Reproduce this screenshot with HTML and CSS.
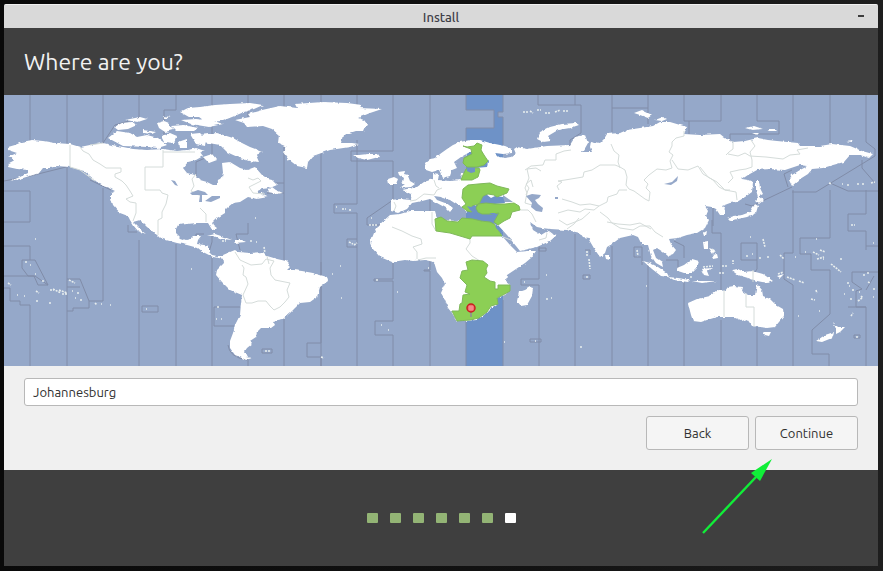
FILE: index.html
```html
<!DOCTYPE html>
<html lang="en">
<head>
    <meta charset="UTF-8">
    <meta name="viewport" content="width=device-width, initial-scale=1.0">
    <title>Install</title>
    <link rel="stylesheet" href="styles.css">
</head>
<body>
    <div class="window">
        <div class="titlebar">
            <span class="titlebar-text">Install</span>
            <button class="minimize" aria-label="Minimize"></button>
        </div>

        <header class="page-header">
            <h1>Where are you?</h1>
        </header>

        <svg class="map" viewBox="4 95 874 271" role="img" aria-label="Timezone map">
            <defs>
                <filter id="coast" x="0" y="0" width="100%" height="100%" color-interpolation-filters="sRGB">
                    <feTurbulence type="fractalNoise" baseFrequency="0.22" numOctaves="2" seed="4" result="noise"/>
                    <feDisplacementMap in="SourceGraphic" in2="noise" scale="3" xChannelSelector="R" yChannelSelector="G"/>
                </filter>
            </defs>

            <rect class="sea" x="4" y="95" width="874" height="271"/>

            <!-- selected timezone -->
            <path class="zone-sea" d="M466 95H503V112H498V117H503V366H466V128H494V110H466Z"/>

            <!-- timezone borders -->
            <g class="zones">
                <path d="M30 95V142M67 95V144M103 95V143M139 95V118L115 125L103 143M176 95V110H164V135M212 95V155L196 162V180M248 95V117M284 95V366M321 95V366M357 95V120M393 95V151H351V161H393V200L367 218V225H380V234"/>
                <path d="M430 95V160M430 198V212M466 95V110H494V128H466V142M503 95V112H498V117H503V145M538 95V105H575M539 234V279H521V285H539V366M575 95V105H581V133L570 140V147M612 95V132M612 108H648V95M648 108V124M684 95V121H721V95M689 121V134M757 95V121H779V134H730V142M793 95V141M830 95V143M866 95V142L875 149V156L816 192H792M862 160V168L875 183M830 183L848 191H878"/>
                <path d="M4 181L30 176L66 167M4 191H30V222H4M30 246H4M30 246V260H22V268L28 276H35L48 285H38L34 276H4M4 288H10V301H20V305H30V366M30 260H35L48 285M67 167V366M103 188V301H89L80 279H67M67 287H80M67 311H73V308H89V301M139 240V366M128 225V232H137M176 244V366M212 256V366M212 236V242L209 252M196 240V234H204"/>
                <path d="M248 223V234H236L240 250M248 359V366M276 183H284M267 193H284M321 262V343H307V357H321V366M357 140V204H334V213H357V366M357 239H347V247H357M393 261V279H374V281H393V321H375V335H393V366M430 261V270H424V271H430V366M466 320V366M503 300V366"/>
                <path d="M575 234V366M612 246V366M648 265V366M684 282V366M684 258V246L674 241M642 265V247H634V257H641M721 320V366M721 290V233H712V220M757 327V366M757 260V243H741V260H757V269L753 275M793 366V285L784 279V253H793V190M829 366V354H812V330L830 314V270H811V254H800V238H830V190M866 366V307H856V291L862 289L852 282V272H878M866 250V231H848V214H866V190M866 307H848M866 246H878M866 290L874 276M713 203V226M666 260H678V270M585 250H590V255M583 275H590V279H583Z"/>
                <path d="M214 307H240M214 307V326H234M142 306H158V312H142ZM262 349H272V353H262ZM530 339H541V342H530ZM854 335H860V338H854ZM539 248H546V251H539ZM792 187L752 206L745 204M792 170L784 174L788 187"/>
                <path d="M228 345Q229 357 247 360M90 180L111 190"/>
            </g>

            <g class="land" filter="url(#coast)">
                <!-- North America -->
                <path d="M8 147L15 145L22 142L32 140L43 141L55 143L70 144L80 147L90 145L103 143L112 145L123 147L133 149L147 150L163 149L177 151L187 150L200 152L203 156L196 160L188 162L183 168L187 173L195 175L200 180L207 182L213 185L217 185L218 181L222 178L223 173L222 163L230 162L240 168L247 170L255 167L262 175L268 179L272 180L277 185L270 188L262 189L255 192L262 192L264 196L268 197L257 199L248 197L240 202L233 203L228 207L225 210V213L217 218L212 223L213 225L217 228L215 230L211 228L208 223L197 223L187 224L178 225L176 229V234L180 238L186 240L190 239L193 236L201 236L198 240L197 244L204 245L209 246V252L212 255L217 256L224 256V259L213 257L203 252L198 248L187 245L177 243L166 240L160 238L157 235L147 227L140 220L133 222L137 226L142 231L146 234L138 231L133 225L130 220L128 216L120 213L113 205L111 198V193L115 191L109 188L103 186L97 182L90 176L84 171L80 170L70 167L57 166L50 168L43 168L39 173L33 175L20 179L10 181L20 177L28 173V170L17 169L8 167L9 163L15 160L8 157L17 153L8 150Z"/>
                <!-- Canadian arctic -->
                <path d="M108 138L117 131L130 133L137 137L147 135L158 138L167 145L158 148L147 147L123 146Z"/>
                <path d="M114 127L122 123L132 122L137 125L128 129L118 130ZM125 120L140 117L147 119L138 122ZM143 130L156 132L152 134L143 133ZM157 123L164 121L169 123L173 130L165 132L159 128ZM161 136L170 133L177 136L174 143L164 142ZM171 126L184 125L198 128L194 131L176 131ZM178 142L187 139L187 148L179 148ZM190 134L200 133L206 139L205 146L196 144ZM181 120L196 119L214 121L223 124L209 127L191 124ZM163 116L171 117L165 119ZM188 150L196 148L205 151L196 154Z"/>
                <path d="M180 112L188 108L200 107L215 105L230 104L250 103L263 105L254 109L244 112L232 117L222 121L206 122L199 117L189 117Z"/>
                <path d="M200 135L217 133L233 138L240 142L250 147L263 152L256 155L259 162L249 161L240 158L231 154L227 152L220 145L203 142ZM203 157L212 154L217 160L209 163Z"/>
                <!-- Greenland, Iceland -->
                <path d="M235 120L250 117L248 114L262 110L280 106L297 108L295 104L323 102L347 103L362 105L359 108L382 109L370 113L358 118L364 120L367 124L364 131L356 131L343 135L341 143L352 143L359 144L350 147L330 150L313 156L308 162L307 168L297 166L288 159L283 152L287 147L278 143L279 135L272 129L263 126L247 127L244 123Z"/>
                <path d="M353 155L359 155L368 154L377 154L379 157L367 160L358 158ZM267 192L272 187L276 190L283 193L277 194Z"/>
                <!-- South America -->
                <path d="M223 255L230 252L235 250L238 252L250 253L263 252L267 256L277 259L286 261L291 266L287 270L294 270L302 271L313 273L327 277L328 281L320 287L317 297L310 302L300 303L295 308L290 313L283 319L273 321L275 325L271 328L261 328L257 332L256 337L250 341L252 344L247 348L245 351L248 357L243 358L235 355L230 348V341L233 333L235 325L240 315L241 303L242 295L230 290L222 282L216 275L217 270L224 263Z"/>
                <path d="M238 356L252 358L246 360ZM207 236L215 234L224 237L232 240L223 239L213 236ZM234 240L242 240L246 242L235 243Z"/>
                <!-- Europe and Asia -->
                <path d="M425 163L430 159L436 158L440 154L447 149L453 145L460 142L470 140L480 140L490 143L505 146L512 149L512 153L503 154L495 153L499 157L505 158L512 157L516 154L514 149L517 147L527 149L547 146L570 145L575 137L585 135L588 143L584 150L580 152L592 152L590 147L591 141L600 143L604 139L607 134L620 133L627 130L640 128L653 126L660 122L670 122L687 127L684 134L700 135L720 134L725 138L733 142L745 141L758 138L768 140L777 141L798 143L800 146L820 146L832 144L850 146L862 151L873 154L869 158L860 155L850 155L844 162L833 165L823 168L812 169L808 174L800 179L792 186L789 180L792 175L800 170L808 166L800 165L785 170L770 169L757 170L748 175L742 179L748 180L753 182L752 192L745 197L737 202L730 203L722 206L725 210V215L720 215L716 209L712 207L705 206L708 211L706 216L709 220L705 228L697 233L687 235L678 238L669 239L671 244L676 250L673 254L668 256L663 252L657 248L653 250L656 258L662 262L663 267L656 263L651 256L648 245L642 245L638 237L633 235L620 238L612 244L607 247L605 253L600 257L595 250L588 238L583 237L580 233L567 230L550 229L542 228L537 227L530 222L533 230L541 235L546 232L549 231L553 234L557 235L550 241L537 247L520 251L516 246L507 235L497 224L498 214L493 214L487 215L480 213L476 208L481 204L468 206L471 213L468 213L462 207L456 204L450 200L442 198L445 202L453 208L450 212L446 208L437 203L430 199L422 201L412 203L407 209L398 213L391 211V200L400 199L411 200L412 194L402 190L417 187L424 182L433 179V173L439 174L438 180L450 181L461 180L462 173L472 174L475 168L487 167L488 161L480 150L470 152L461 157L454 162L457 168L452 170L450 176L443 178L439 170L432 172L426 170Z"/>
                <!-- British Isles -->
                <path d="M398 172L405 171L404 175L408 176L410 181L415 184L411 187L400 188L405 184L402 182L403 178L399 175ZM388 179L394 177L398 179L396 184L389 184Z"/>
                <!-- Africa -->
                <path d="M390 215L400 214L410 211L423 211L435 211L437 218L443 220L457 221L467 219L485 223L496 224L499 231L503 237L510 245L517 252L527 251L536 251L531 258L525 263L516 269L507 275L506 281L510 284V290L505 295L497 298V304L490 309L484 315L477 320L465 321L457 321L452 313L448 308L444 298L441 293L445 284L442 278L437 272L434 262L425 260L413 261L405 260L392 262L380 257L372 248L370 243L374 233L379 225Z"/>
                <path d="M519 292L525 290L530 287L533 288L532 296L527 305L521 306L517 301Z"/>
                <!-- Arctic Russia islands -->
                <path d="M537 139L540 132L550 127L562 124L576 123L579 125L570 128L558 130L548 136L551 141L543 142ZM634 113L642 110L652 115L648 118L640 115ZM655 120L663 117L667 119L662 121ZM745 128L754 126L763 129L752 130ZM766 129L775 129L777 131L769 131ZM846 141L853 140L852 142ZM752 133L759 133L757 135Z"/>
                <!-- Japan, Sakhalin, Taiwan -->
                <path d="M756 181L759 181L760 188L763 194L758 197L756 190ZM755 201L759 196L764 200L759 204ZM727 218L733 216L742 215L750 212L755 204L758 206L756 213L747 217L738 219L730 221ZM703 233L707 231L706 236L704 236Z"/>
                <!-- South-east Asia -->
                <path d="M643 261L650 263L658 267L667 273L669 277L661 276L652 269ZM668 277L678 278L690 280L688 282L674 280ZM677 268L684 265L692 259L699 261L697 268L692 273L684 273L678 271ZM701 269L712 268L707 271L709 276L704 275ZM703 242L708 241L708 249L704 249ZM712 255L717 254L718 258L713 259ZM709 248L715 250L713 254ZM731 270L738 269L744 272L752 271L763 274L773 281L768 283L757 281L748 278L738 275ZM777 276L784 274L780 278ZM692 281L701 281L717 281L702 283ZM605 255L610 255L610 260L606 259Z"/>
                <!-- Australia, New Zealand -->
                <path d="M688 303L697 299L710 296L717 290L725 291L728 287L734 286L743 287L742 291L748 295L755 295L757 284L762 290L763 296L770 299L776 305L783 309L784 316L779 322L775 327L767 328L760 327L752 326L747 319L742 321L733 317L717 317L707 320L701 322L693 321L691 315ZM763 332L771 332L769 336L765 335ZM833 322L838 327L845 327L840 332L836 334L836 329ZM834 332L832 338L822 342L816 341L825 335Z"/>
            </g>

            <!-- country borders -->
            <g class="borders">
                <path d="M70 145V167L80 170L95 181M80 147L83 151L89 154L93 160L100 164L106 168H121V172L115 174V177L122 181L126 185L130 191L133 196L126 199L130 202L136 203V213L133 221M163 150V167H145V190H160L162 193L168 195L166 204L162 212V218L158 220V235M163 152H195M196 174L192 179L194 186L191 191L201 196M200 208L206 214V222M248 178L253 180L258 178L261 181L249 187L253 193L265 194M90 145L103 143"/>
                <path d="M235 252L240 260L251 265L262 264L266 259L274 261L270 268L271 275L275 280L290 283L287 290L289 297L285 302L280 307L274 310L270 306L266 301L258 301L252 303L246 303L243 295L248 284L246 277L243 275L244 268L242 265M267 256L269 264"/>
                <path d="M392 227L402 231L412 236L421 239L422 244L413 247L417 252L417 259M436 231L432 224L432 212M470 238V243L466 249L472 256L480 261M418 260L426 258H436M503 237L511 240M539 240L546 238L547 233M526 195L529 188L526 184L531 180L533 187M525 170L531 166L543 165L545 160H556V154L564 151L571 150M541 171L536 168L527 169L529 178L525 188L527 193L525 203L532 205L539 206M559 190L557 186L562 182L558 181L565 180L583 177L584 172L592 170L600 165H615L620 167L625 170L627 177L626 185L629 189L634 191L645 199L649 201L650 192L646 188L648 184L644 180L649 175L657 169L666 170L672 168L670 161L673 155L669 152L672 146V142L676 138L684 136V131M611 144L614 151L619 155L618 162L620 168M672 160L678 169L688 170L698 166L703 174L713 180L719 187L725 190L730 190M562 199L572 202L580 205L590 204L599 206L607 202L608 197L617 194L619 190L627 190M558 213L568 210L580 212L585 209L594 210L599 206M559 220L567 225L575 222L582 219L590 212M600 212L608 218L612 223L620 228L633 230L640 226L650 226L655 232L663 237M607 222L618 224L630 225L640 223L651 229M726 155L729 152L733 149V141M728 154L738 156L745 153L750 156L766 157L783 159L790 155L800 154L797 150L808 148M751 140L755 146L750 152L752 160V167L746 169L739 170L730 172L733 178L728 183M700 167L708 177L717 182L725 190L736 192L737 200M410 201L416 200L424 194L434 195L437 190L442 188M434 180L436 186L439 188M394 202L396 206L394 211M520 210L528 210L532 214L536 222M567 229L574 224L579 218"/>
                <path d="M724 290V317M746 293V307H754V327M753 270V282"/>
            </g>

            <!-- lakes and inner seas -->
            <path class="sea" d="M171 180L175 181L178 186L175 185ZM190 193L198 190L205 192L208 195L202 195V202L199 202L200 195L192 195ZM205 201L212 196H220V198L211 202ZM526 196L532 194L541 195L539 198L535 200L538 204L543 208L542 212L536 211L531 207L532 203ZM664 184L672 182L678 176L677 181L671 185ZM555 197H558V199H555ZM503 195L513 202H503ZM434 196L441 197L449 202L445 203L437 200Z"/>
            <path class="zone-sea" d="M479 204L482 197L486 194L491 198L495 196L503 197L505 203L495 204ZM467 207L477 207L480 213L499 213L496 222L487 222L473 219L467 219Z"/>

            <!-- countries in the selected timezone -->
            <g class="zone-land">
                <path d="M463 146L467 147L474 146L477 143L482 145L481 150L484 155L488 161L484 165L477 167L467 167L463 163L464 158L472 154L471 149ZM463 175L466 169L479 168L480 170L478 177L472 180H461L463 175ZM463 189L468 185L478 184L490 183L497 186L509 189L507 193L497 197L494 195L488 194L483 196L479 204L472 206L475 210L471 212L467 211L462 207L466 204L462 198Z"/>
                <path d="M476 208L478 204L486 203L495 204L505 204L514 203L519 206L520 210L512 212L510 218L504 221L498 225L494 222L499 213L491 214L482 214L478 212ZM435 219L441 217L447 221L458 222L462 218L473 219L481 221L490 222L494 224L497 228L499 231L502 236H472L470 239L450 233L436 231Z"/>
                <path d="M466 262L472 260L483 261L488 265L486 269L487 273L484 277L490 281L495 282V289L498 289V285H510V291L503 295L497 298L498 304L491 306L487 312L479 318L470 320L457 321L454 315L452 311L459 311L460 304L462 303L463 295L470 294L465 292L467 285L460 278L462 271L468 270Z"/>
            </g>
            <path class="zone-sea" d="M467 168H475V172L471 173L467 171ZM467 206L471 207L475 205L475 211L478 214L474 213L470 210ZM489 213H496L494 215ZM495 223L503 235L496 228Z"/>

            <!-- small islands -->
            <path class="specks" d="M25 262h2M30 265h1M35 274h1M42 281h2M8 283l3 2M17 295h1M24 296h1M36 291l3 2M36 301h2M49 303h2M50 290h4M53 289l8 4M59 290l8 3M62 294h5M72 291h1M77 293h3M75 298h1M80 300h3M69 280l6 3M95 303l2 2M101 304h1M110 305h1M146 309h1M35 239h1M217 307h2M216 319h1M221 319h1M265 351h6M321 357l3 1M340 266h1M332 274h1M341 298h1M349 242l4 2M354 245l3-2M336 207h1M342 209h4M349 210h2M371 218h1M369 225h9M255 218h1M376 280h3M397 292h1M381 325h1M388 330h1M428 268h1M524 282h1M546 275h1M546 299h2M551 298h1M535 341h1M504 342h1M587 251v6M589 259l1 10M586 277h2M637 250l1 6M580 347h3M646 286h1"/>
            <path class="specks" d="M523 112h6M530 111l3 2M537 110h4M545 113h5M555 112l5-2M563 111h6M829 183l3 1M842 184h1M847 185h3M857 184h2M862 184h2M871 183l4-1M851 225h4M873 243h1M763 239l2 8M750 237h1M746 256h3M752 254h1M759 258h3M767 257h3M733 260v4M780 255l4 4M795 257h1M805 252h1M813 252l6 3M817 259l7-2M820 250l5 2M816 239h1M823 259h1M840 259h2M831 264l10 8M867 273h3M863 275h3M787 277l8 3M799 281l5 2M816 290l1 3M811 299l4 1M819 311h1M798 316h1M847 283h2M849 286h1M853 289v3M844 294h1M850 299h2M861 296l2 2M858 301l4-3M859 292h1M873 289h2M873 297h1M868 282l2 1M851 316l2-3M856 337h2M719 273h5M722 266h6M712 249l3 3M703 267l10-1M690 277h3M778 274l5-2M222 241h4M250 241h2M264 247l1 6M191 269h1M256 242h1"/>

            <!-- location pin -->
            <g class="pin">
                <path class="pin-needle" d="M471 312V317"/>
                <circle class="pin-head" cx="471" cy="308" r="4"/>
                <path class="pin-shine" d="M469 307H473M469 309H473"/>
            </g>
        </svg>

        <main class="location">
            <input class="location-input" type="text" value="Johannesburg" aria-label="Location">
            <div class="actions">
                <button class="btn">Back</button>
                <button class="btn">Continue</button>
            </div>
        </main>

        <footer class="progress">
            <span class="dot"></span>
            <span class="dot"></span>
            <span class="dot"></span>
            <span class="dot"></span>
            <span class="dot"></span>
            <span class="dot"></span>
            <span class="dot current"></span>
            <svg class="arrow" viewBox="0 0 70 75" aria-hidden="true">
                <path d="M1 74L54 18" stroke="#10ee38" stroke-width="2.4"/>
                <path d="M70 0L49 14L58 22Z" fill="#10ee38"/>
            </svg>
        </footer>
    </div>
</body>
</html>
```
FILE: styles.css
```css
* {
    margin: 0;
    padding: 0;
    box-sizing: border-box;
    font-family: "Ubuntu", "Noto Sans", sans-serif;
}

body {
    min-height: 100vh;
    padding: 4px 5px 5px 4px;
    background: linear-gradient(90deg, #090909, #121212 60%, #1e1e1e);
    display: flex;
}

.window {
    flex: 1;
    display: flex;
    flex-direction: column;
    background-color: #3f3f3f;
    border-radius: 2px 2px 0 0;
}

.titlebar {
    display: flex;
    align-items: center;
    justify-content: center;
    position: relative;
    height: 24px;
    background-color: #d9d9d9;
    border-top: 1px solid #f0f0f0;
    border-radius: 2px 2px 0 0;
}

.titlebar-text {
    font-size: 13px;
    font-weight: 500;
    line-height: 24px;
    color: #404048;
}

.minimize {
    position: absolute;
    right: 14px;
    top: 10px;
    width: 6px;
    height: 2px;
    border: none;
    background-color: #3c3c3c;
}

.page-header {
    padding: 18px 20px;
}

.page-header h1 {
    font-size: 23px;
    font-weight: 400;
    line-height: 31px;
    color: #f2f2f2;
}

.map {
    display: block;
    width: 100%;
}

.sea {
    fill: #95a8c9;
}

.zone-sea {
    fill: #6e92c7;
}

.zones {
    fill: none;
    stroke: #808ca8;
    stroke-width: 1;
}

.land {
    fill: #ffffff;
}

.borders {
    fill: none;
    stroke: #d5dcda;
    stroke-width: 1;
    stroke-linejoin: round;
}

.zone-land {
    fill: #8ccf55;
    stroke: #7fb85a;
    stroke-width: 1;
}

.specks {
    fill: none;
    stroke: #e8eeee;
    stroke-width: 1.6;
    stroke-dasharray: 2 1;
}

.pin-needle {
    stroke: #8f9a88;
    stroke-width: 2;
}

.pin-head {
    fill: #f07070;
    stroke: #c81e1e;
    stroke-width: 1.5;
}

.pin-shine {
    stroke: #f8a0a0;
    stroke-width: 1;
}

.location {
    padding: 12px 20px 20px;
    background-color: #f0f0f0;
}

.location-input {
    display: block;
    width: 100%;
    height: 28px;
    padding: 0 8px;
    border: 1px solid #b8b8b8;
    border-radius: 3px;
    background-color: #ffffff;
    font-size: 13px;
    color: #303030;
}

.actions {
    display: flex;
    justify-content: flex-end;
    gap: 6px;
    margin-top: 10px;
}

.btn {
    width: 103px;
    height: 34px;
    border: 1px solid #b8b8b8;
    border-radius: 3px;
    background-color: #f5f5f5;
    font-size: 13px;
    color: #303030;
}

.progress {
    flex: 1;
    position: relative;
    display: flex;
    align-items: center;
    justify-content: center;
    gap: 12px;
}

.dot {
    width: 11px;
    height: 10px;
    border-radius: 1px;
    background-color: #93b475;
}

.dot.current {
    background-color: #ffffff;
}

/* pointer to the Continue button */
.arrow {
    position: absolute;
    right: 106px;
    top: -11px;
    width: 70px;
    height: 75px;
    fill: none;
}
```
